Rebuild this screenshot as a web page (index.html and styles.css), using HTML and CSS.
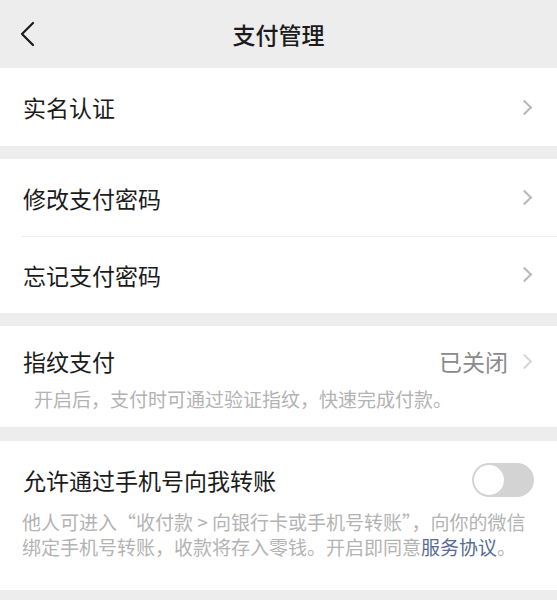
FILE: index.html
```html
<!DOCTYPE html>
<html lang="zh-CN">

<head>
    <meta charset="UTF-8">
    <meta name="viewport" content="width=device-width, initial-scale=1.0">
    <title>支付管理</title>
    <link rel="stylesheet" href="styles.css">
</head>

<body>

    <header class="topbar">
        <span class="back">
            <svg width="16" height="26" viewBox="0 0 16 26">
                <polyline points="13,2 2,13 13,24" fill="none" stroke="#1a1a1a" stroke-width="2.2"
                    stroke-linecap="round" stroke-linejoin="round" />
            </svg>
        </span>
        <h1>支付管理</h1>
        <span></span>
    </header>

    <section class="group first">
        <div class="cell">
            <span class="label">实名认证</span>
            <span class="arrow"></span>
        </div>
    </section>

    <section class="group">
        <div class="cell">
            <span class="label">修改支付密码</span>
            <span class="arrow"></span>
        </div>
        <div class="cell">
            <span class="label">忘记支付密码</span>
            <span class="arrow"></span>
        </div>
    </section>

    <section class="group finger">
        <div class="cell-head">
            <span class="label">指纹支付</span>
            <span class="value">已关闭</span>
            <span class="arrow light"></span>
        </div>
        <p class="desc indent">开启后，支付时可通过验证指纹，快速完成付款。</p>
    </section>

    <section class="group phone">
        <div class="cell-head">
            <span class="label">允许通过手机号向我转账</span>
            <span class="switch"><span class="knob"></span></span>
        </div>
        <p class="desc">他人可进入“收付款 &gt; 向银行卡或手机号转账”，向你的微信绑定手机号转账，收款将存入零钱。开启即同意<a href="#">服务协议</a>。</p>
    </section>

</body>

</html>
```

FILE: styles.css
```css
/* Global */
body {
    margin: 0;
    padding: 0;
    background-color: #ededed;
    font-family: "Noto Sans CJK SC", "Noto Sans", sans-serif;
    color: #1b1b1b;
}

/* Top bar */
.topbar {
    height: 68px;
    display: grid;
    grid-template-columns: 1fr auto 1fr;
    align-items: center;
    padding: 0 20px;
    background-color: #ededed;
}

.topbar h1 {
    margin: 0;
    font-size: 23px;
    font-weight: 500;
    line-height: 32px;
}

.back {
    display: flex;
    align-items: center;
}

/* Groups */
.group {
    background-color: #fff;
    margin-bottom: 13px;
}

.cell {
    height: 77px;
    display: flex;
    align-items: center;
    padding: 0 27px 0 23px;
    position: relative;
}

.first .cell {
    height: 78px;
}

.cell + .cell::before {
    content: "";
    position: absolute;
    top: 0;
    left: 22px;
    right: 0;
    height: 1px;
    background-color: #ececec;
}

.label {
    flex: 1;
    font-size: 23px;
    line-height: 32px;
}

.value {
    font-size: 23px;
    line-height: 32px;
    color: #8a8a8a;
    margin-right: 11px;
}

/* Chevron */
.arrow {
    width: 9px;
    height: 9px;
    border-top: 2px solid #b8b8b8;
    border-right: 2px solid #b8b8b8;
    transform: rotate(45deg);
}

.arrow.light {
    border-color: #d6d6d6;
}

/* Detail sections */
.cell-head {
    display: flex;
    align-items: center;
    padding: 0 27px 0 23px;
}

.finger {
    padding: 19px 0 15px;
    margin-bottom: 14px;
}

.phone {
    padding: 22px 0 31px;
}

.desc {
    margin: 0;
    padding: 0 24px 0 22px;
    font-size: 19px;
    line-height: 25px;
    color: #b3b3b3;
}

.finger .desc {
    margin-top: 9px;
    line-height: 26px;
}

.phone .desc {
    margin-top: 12px;
}

.desc.indent {
    padding-left: 34px;
}

.desc a {
    color: #576b95;
    text-decoration: none;
}

/* Toggle */
.switch {
    width: 62px;
    height: 34px;
    border-radius: 17px;
    background-color: #d3d3d3;
    display: flex;
    align-items: center;
    padding: 0 2px;
    box-sizing: border-box;
    margin-right: -4px;
}

.knob {
    width: 30px;
    height: 30px;
    border-radius: 50%;
    background-color: #fff;
}
```
